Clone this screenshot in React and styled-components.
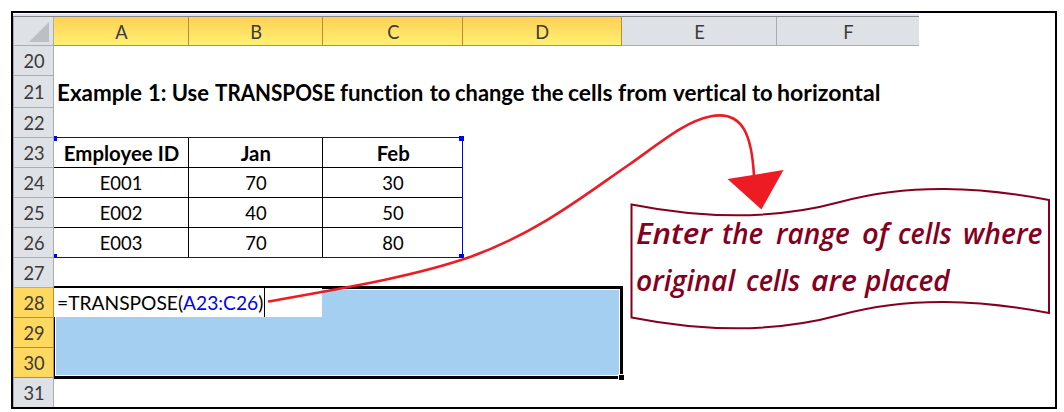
import React from "react";
import styled, { createGlobalStyle } from "styled-components";

const Global = createGlobalStyle`
  body { margin: 0; background: #fff; }
  * { box-sizing: border-box; }
`;

const Page = styled.div`
  position: relative;
  width: 1064px;
  height: 412px;
  padding: 11px 0 0 11px;
  overflow: hidden;
  font-family: Lato, "Liberation Sans", sans-serif;
  font-variant-ligatures: none;
  font-size: 19px;
  color: #000;
`;

const Frame = styled.div`
  width: 1046px;
  height: 398px;
  border: 2px solid #000;
  padding-top: 1px;
  overflow: hidden;
`;

const HeaderRow = styled.div`
  display: flex;
  width: 906px;
  height: 32px;
  border-top: 2px solid #dde2ee;
  box-shadow: inset 0 1px 0 #85888c;
  padding-top: 1px;
  background: #dee1e6;
`;

const Corner = styled.div`
  display: flex;
  align-items: flex-end;
  justify-content: flex-end;
  width: 41px;
  height: 29px;
  padding: 0 4px 3px 0;
  border: solid #a9adb2;
  border-width: 0 1px 1px;
`;

const ColumnHead = styled.div`
  display: flex;
  justify-content: center;
  width: ${(p) => p.$w}px;
  height: 29px;
  padding-left: 1px;
  line-height: 29px;
  color: #3b3b3b;
  background: ${(p) => (p.$on ? "linear-gradient(#ffd055, #fff072)" : "#dee1e6")};
  border: solid ${(p) => (p.$on ? "#c08b35" : "#aaadb2")};
  border-width: 0 ${(p) => (p.$last ? 0 : 1)}px 1px 0;
`;

const Row = styled.div`
  display: flex;
  height: ${(p) => p.$h || 30}px;
`;

const RowHead = styled.div`
  display: flex;
  justify-content: center;
  align-items: center;
  width: 41px;
  padding-left: 1px;
  color: #3b3b3b;
  background: ${(p) => (p.$on ? "#ffd85f" : "#dee1e6")};
  border: solid ${(p) => (p.$on ? "#c08b35" : "#aaadb2")};
  border-width: 0 1px 1px;
  border-left-color: #a9adb2;
`;

const Cell = styled.div`
  display: flex;
  justify-content: center;
  align-items: center;
  width: ${(p) => p.$w}px;
  padding-left: 1px;
  font-size: ${(p) => (p.$bold ? 20 : 19)}px;
  font-weight: ${(p) => (p.$bold ? 700 : 400)};
  border: solid #000;
  border-width: 0 1px 1px 0;
`;

const Title = styled.div`
  display: flex;
  padding: 3px 0 0 3px;
  font-size: 22px;
  line-height: 28px;
  font-weight: 700;
  white-space: nowrap;
`;

const Editor = styled.div`
  position: relative;
  z-index: 2;
  display: flex;
  align-items: center;
  width: 268px;
  height: 29px;
  padding-left: 3px;
  background: #fff;
  white-space: nowrap;
`;

const Fit = styled.span`
  display: inline-block;
  white-space: nowrap;
  transform: scaleX(${(p) => p.$x || 0.96});
  transform-origin: ${(p) => (p.$left ? "left" : "center")};
`;

const Ref = styled.span`
  color: #0000f5;
`;

const Caret = styled.div`
  position: absolute;
  left: 210px;
  top: 0;
  width: 1px;
  height: 29px;
  background: #000;
`;

const SourceRange = styled.div`
  position: absolute;
  left: 54px;
  top: 137px;
  width: 409px;
  height: 121px;
  border: solid #0000ff;
  border-width: 1px 1px 1px 0;
`;

const Handle = styled.i`
  position: absolute;
  width: ${(p) => p.$w}px;
  height: ${(p) => p.$h}px;
  left: ${(p) => p.$l}px;
  top: ${(p) => p.$t}px;
  background: #0000ff;
`;

const Selection = styled.div`
  position: absolute;
  z-index: 1;
  left: 54px;
  top: 286px;
  width: 569px;
  height: 93px;
  border: 3px solid #000;
  border-left-width: 1px;
  background: #a5cff1;
  box-shadow: inset 0 0 0 1px #fff;
`;

const FillHandle = styled.i`
  position: absolute;
  right: -4px;
  bottom: -4px;
  width: 6px;
  height: 6px;
  background: #000;
  border: solid #fff;
  border-width: 1px 0 0 1px;
`;

const Arrow = styled.svg`
  position: absolute;
  z-index: 3;
  left: 0;
  top: 0;
`;

const Callout = styled.div`
  position: absolute;
  z-index: 4;
  left: 630px;
  top: 186px;
  width: 421px;
  height: 144px;
  padding: 24px 0 0 6px;
  font-family: "Open Sans", "Noto Sans", sans-serif;
  font-size: 28px;
  font-style: italic;
  font-weight: 600;
  line-height: 47px;
  color: #85001f;
`;

const Banner = styled.svg`
  position: absolute;
  left: 0;
  top: 0;
`;

const Line = styled.div`
  display: flex;
`;

const Word = styled.div`
  flex: none;
  width: ${(p) => p.$w}px;
`;

const columns = [["A", 135], ["B", 134], ["C", 140], ["D", 159], ["E", 155], ["F", 142]];
const table = {
  23: ["Employee ID", "Jan", "Feb"],
  24: ["E001", "70", "30"],
  25: ["E002", "40", "50"],
  26: ["E003", "70", "80"],
};
const rows = [20, 21, 22, 23, 24, 25, 26, 27, 28, 29, 30, 31];

// Each word: text, advance to the next word, horizontal scale.
const title = [
  ["Example", 91, 1.02], ["1:", 23.7, 1], ["Use", 43.6, 1], ["TRANSPOSE", 125.2, 0.94],
  ["function", 89.2, 1.015], ["to", 25.1, 1], ["change", 76.5, 0.995], ["the", 37, 1],
  ["cells", 49.5, 1.04], ["from", 55.2, 1.045], ["vertical", 79, 1.02], ["to", 25.5, 1],
  ["horizontal", 103.5, 1.05],
];
const note = [
  [["Enter", 86, 1.12], ["the", 54, 0.99], ["range", 86, 1], ["of", 36, 1.04], ["cells", 65, 0.96], ["where", 80, 1.01]],
  [["original", 110, 1.01], ["cells", 65, 0.97], ["are", 54, 1.08], ["placed", 90, 1]],
];

function Words({ items }) {
  return items.map(([text, w, x], i) => (
    <Word key={i} $w={w}>
      <Fit $x={x} $left>{text}</Fit>
    </Word>
  ));
}

export default function App() {
  return (
    <Page>
      <Global />
      <Frame>
        <HeaderRow>
          <Corner>
            <svg width="20" height="20"><path d="M20 0V20H0Z" fill="#bbc0c4" /></svg>
          </Corner>
          {columns.map(([name, w], i) => (
            <ColumnHead key={name} $w={w} $on={i < 4} $last={i === 5}><Fit>{name}</Fit></ColumnHead>
          ))}
        </HeaderRow>
        {rows.map((n) => (
          <Row key={n} $h={n === 21 ? 32 : 30}>
            <RowHead $on={n >= 28 && n <= 30}><Fit>{n}</Fit></RowHead>
            {n === 21 && <Title><Words items={title} /></Title>}
            {table[n] && table[n].map((t, i) => (
              <Cell key={i} $w={columns[i][1]} $bold={n === 23}>
                <Fit $x={n === 23 ? 1.02 : 0.97}>{t}</Fit>
              </Cell>
            ))}
            {n === 28 && (
              <Editor>
                <Fit $x={1.01} $left>=TRANSPOSE(<Ref>A23:C26</Ref>)</Fit>
                <Caret />
              </Editor>
            )}
          </Row>
        ))}
      </Frame>
      <SourceRange>
        <Handle $l={0} $t={-2} $w={3} $h={5} />
        <Handle $l={405} $t={-2} $w={5} $h={5} />
        <Handle $l={0} $t={116} $w={3} $h={4} />
        <Handle $l={405} $t={116} $w={5} $h={4} />
      </SourceRange>
      <Selection><FillHandle /></Selection>
      <Arrow width="1064" height="412" fill="none">
        <path d="M268 301.5C350 287 415 276 470 257C540 232 590 191 630 164C665 139 687 121 710 116.500C745 109 752 140 754 176" stroke="#ed1c24" strokeWidth="2.6" />
        <path d="M727.500 179L783.500 170L761.500 209.500Z" fill="#ed1c24" />
      </Arrow>
      <Callout>
        <Banner width="421" height="144" fill="none">
          <path d="M1.500 18.500C70 32 140 35 210 16S350 1 419 14V127C350 114 280 110 210 129S70 145 1.500 131.500Z" stroke="#85001f" strokeWidth="2" />
        </Banner>
        {note.map((line, i) => <Line key={i}><Words items={line} /></Line>)}
      </Callout>
    </Page>
  );
}
